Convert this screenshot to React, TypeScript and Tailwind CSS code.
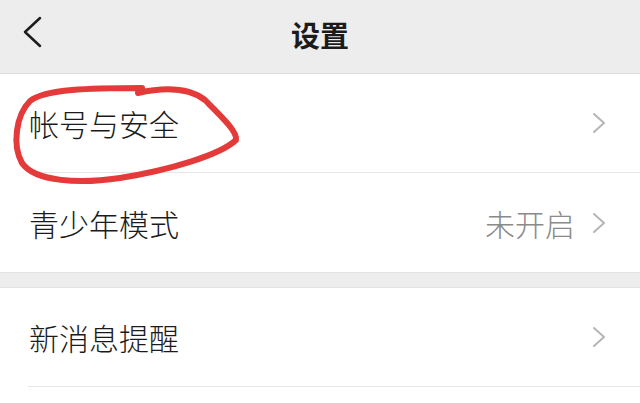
const font = { fontFamily: '"Noto Sans CJK SC", "Noto Sans", sans-serif' };

function Chevron({ className }: { className?: string }) {
  return (
    <svg width="14" height="22" viewBox="0 0 14 22" className={className} fill="none">
      <path d="M2 2 L12 11 L2 20" stroke="#b5b5b5" strokeWidth="2" strokeLinecap="round" strokeLinejoin="round" />
    </svg>
  );
}

interface RowProps {
  label: string;
  value?: string;
  divider?: boolean;
}

function Row({ label, value, divider }: RowProps) {
  return (
    <div className="flex h-[99px] flex-col bg-white">
      <div className="flex flex-1 items-center justify-between pl-[29px] pr-[34px]">
        <span className="text-[30px] font-light leading-none text-[#1b1b1b]">{label}</span>
        <div className="flex items-center gap-[17px]">
          {value && <span className="text-[30px] font-light leading-none text-[#8a8a8a]">{value}</span>}
          <Chevron />
        </div>
      </div>
      {divider && <div className="ml-[28px] h-px bg-[#e6e6e6]" />}
    </div>
  );
}

export default function App() {
  return (
    <div className="relative h-[403px] w-[640px] overflow-hidden bg-white" style={font}>
      <header className="relative flex h-[74px] items-center justify-center border-b border-[#dcdcdc] bg-[#ededed]">
        <svg width="24" height="34" viewBox="0 0 24 34" className="absolute left-[20px] top-[15px]" fill="none">
          <path d="M20 3 L5 17 L20 31" stroke="#1d1d1d" strokeWidth="2.5" strokeLinecap="round" strokeLinejoin="round" />
        </svg>
        <h1 className="-mt-[4px] text-[29px] font-bold leading-none text-[#1b1b1b]">设置</h1>
      </header>

      <Row label="帐号与安全" divider />
      <Row label="青少年模式" value="未开启" />
      <div className="h-[16px] border-y border-[#e2e2e2] bg-[#ededed]" />
      <Row label="新消息提醒" divider />

      {/* hand-drawn annotation */}
      <svg className="pointer-events-none absolute left-0 top-0" width="640" height="403" fill="none">
        <path
          d="M138 93 C165 87, 188 87, 205 100 C220 115, 238 132, 236 140 C220 155, 170 170, 120 178 C80 184, 35 182, 22 163 C12 145, 16 115, 30 101 C45 89, 90 88, 142 88"
          stroke="#e43a3a"
          strokeWidth="6"
          strokeLinecap="round"
          strokeLinejoin="round"
        />
      </svg>
    </div>
  );
}
